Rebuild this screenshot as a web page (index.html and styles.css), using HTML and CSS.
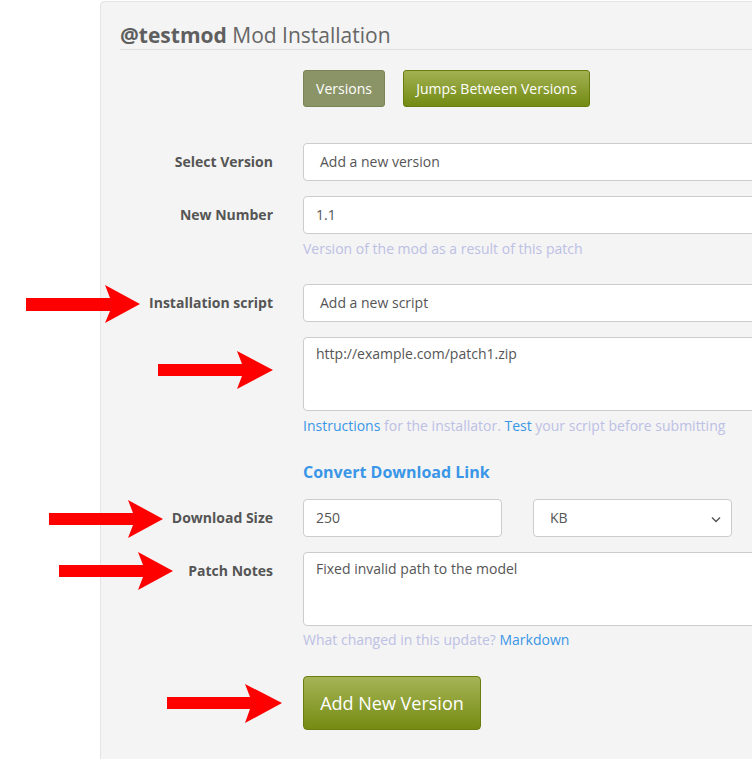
FILE: index.html
```html
<!DOCTYPE html>
<html>
<head>
<meta charset="utf-8">
<link rel="stylesheet" href="styles.css">
</head>
<body>
<div class="panel">
  <h2 class="title"><b>@testmod</b> Mod Installation</h2>
  <div class="tabs">
    <button class="tab tab-muted">Versions</button>
    <button class="tab tab-green">Jumps Between Versions</button>
  </div>

  <div class="row first">
    <label class="lbl">Select Version</label>
    <div class="field"><div class="input sel">Add a new version</div></div>
  </div>
  <div class="row">
    <label class="lbl">New Number</label>
    <div class="field">
      <div class="input">1.1</div>
      <div class="help">Version of the mod as a result of this patch</div>
    </div>
  </div>
  <div class="row gap-lg">
    <label class="lbl">Installation script</label>
    <div class="field">
      <div class="input sel">Add a new script</div>
      <div class="input area">http://example.com/patch1.zip</div>
      <div class="help"><a>Instructions</a> for the installator. <a>Test</a> your script before submitting</div>
    </div>
  </div>
  <div class="row">
    <div class="lbl"></div>
    <div class="field"><div class="convert">Convert Download Link</div></div>
  </div>
  <div class="row size-row">
    <label class="lbl">Download Size</label>
    <div class="field split">
      <div class="input half">250</div>
      <div class="input half sel select">KB
        <svg class="chev" width="10" height="7" viewBox="0 0 10 7"><path d="M1 1.5 L5 5.5 L9 1.5" fill="none" stroke="#555" stroke-width="1.4"/></svg>
      </div>
    </div>
  </div>
  <div class="row notes-row">
    <label class="lbl top">Patch Notes</label>
    <div class="field">
      <div class="input area">Fixed invalid path to the model</div>
      <div class="help">What changed in this update? <a>Markdown</a></div>
    </div>
  </div>
  <div class="row submit-row">
    <div class="lbl"></div>
    <div class="field"><button class="submit">Add New Version</button></div>
  </div>
</div>

<svg class="arrows" width="752" height="759" viewBox="0 0 752 759">
  <g fill="#ff0000">
    <polygon points="26,298 110,298 105,285 140,304 105,323 110,311 26,311"/>
    <polygon points="158,364 242,364 237,351 273,370 237,389 242,376 158,376"/>
    <polygon points="49,513 133,513 128,500 163,519 128,538 133,525 49,525"/>
    <polygon points="59,565 143,565 138,552 173,571 138,590 143,577 59,577"/>
    <polygon points="167,697 250,697 245,684 282,703 245,723 250,709 167,709"/>
  </g>
</svg>
</body>
</html>
```

FILE: styles.css
```css
html, body {
  margin: 0;
  padding: 0;
  background: #ffffff;
  overflow: hidden;
  width: 752px;
  height: 759px;
}
body {
  font-family: "Open Sans", "Liberation Sans", sans-serif;
  font-size: 14px;
  color: #555555;
  position: relative;
}
.panel {
  margin: 1px 0 0 100px;
  width: 760px;
  height: 800px;
  box-sizing: border-box;
  background: #f4f4f4;
  border: 1px solid #e4e4e4;
  border-radius: 4px 0 0 0;
  padding: 19px 0 0 19px;
}
.title {
  margin: 0;
  font-size: 21px;
  line-height: 28px;
  font-weight: 400;
  color: #666666;
  border-bottom: 1px solid #e0e0e0;
}
.title b {
  font-weight: 700;
  color: #5f5f5f;
}
.tabs {
  display: flex;
  gap: 18px;
  margin: 20px 0 0 183px;
}
.tab {
  font-family: inherit;
  font-size: 14px;
  height: 37px;
  padding: 0 12px;
  border-radius: 3px;
  color: #ffffff;
  cursor: pointer;
}
.tab-muted {
  background: #8b9467;
  border: 1px solid #7b8456;
  width: 82px;
}
.tab-green {
  background: linear-gradient(#a3b153, #728b12);
  border: 1px solid #667c0d;
  width: 187px;
}
.row {
  display: flex;
  gap: 30px;
  margin-top: 15px;
}
.row.first { margin-top: 36px; }
.row.gap-lg { margin-top: 25px; }
.lbl {
  width: 153px;
  flex: none;
  text-align: right;
  font-weight: 700;
  color: #555555;
  line-height: 38px;
}
.lbl.top { line-height: 38px; }
.field {
  width: 480px;
  flex: none;
}
.input {
  box-sizing: border-box;
  height: 38px;
  background: #ffffff;
  border: 1px solid #cccccc;
  border-radius: 4px;
  padding: 0 12px;
  line-height: 36px;
  color: #555555;
}
.input.sel { padding-left: 16px; }
.input.area {
  height: 74px;
  margin-top: 15px;
  line-height: 20px;
  padding-top: 6px;
}
.help {
  margin-top: 5px;
  line-height: 20px;
  font-size: 14px;
  color: #bcc0e4;
}
.help a { color: #3a96e6; }
.convert {
  margin-top: 10px;
  line-height: 22px;
  font-size: 16px;
  font-weight: 700;
  color: #3a96e6;
}
.size-row { margin-top: 16px; }
.split {
  display: flex;
  gap: 31px;
  width: 429px;
}
.half { width: 199px; flex: none; }
.select { position: relative; }
.chev {
  position: absolute;
  right: 10px;
  top: 16px;
}
.notes-row .input.area { margin-top: 0; }
.notes-row .help { margin-top: 4px; }
.submit-row { margin-top: 26px; }
.submit {
  font-family: inherit;
  font-size: 18px;
  color: #ffffff;
  height: 54px;
  width: 178px;
  background: linear-gradient(#a5b456, #758b12);
  border: 1px solid #6a7d0f;
  border-radius: 4px;
  cursor: pointer;
}
.arrows {
  position: absolute;
  left: 0;
  top: 0;
  pointer-events: none;
}
```
